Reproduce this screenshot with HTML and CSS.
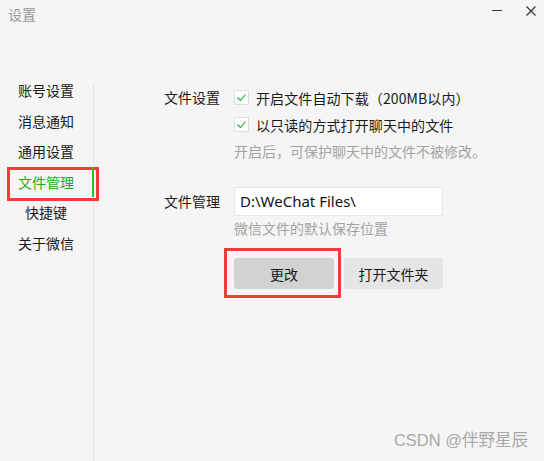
FILE: index.html
```html
<!DOCTYPE html>
<html lang="zh-CN">
<head>
<meta charset="utf-8">
<title>设置</title>
<link rel="stylesheet" href="styles.css">
</head>
<body>
<div class="window">
  <header class="titlebar">
    <span class="title">设置</span>
    <div class="controls">
      <span class="ctl-min"></span>
      <svg class="ctl-close" width="10" height="10" viewBox="0 0 10 10"><path d="M0.5 0.5 L9.5 9.5 M9.5 0.5 L0.5 9.5" stroke="#333" stroke-width="1.2" fill="none"/></svg>
    </div>
  </header>
  <div class="main">
    <nav class="sidebar">
      <div class="item">账号设置</div>
      <div class="item">消息通知</div>
      <div class="item">通用设置</div>
      <div class="item active">文件管理<span class="annot annot-nav"></span></div>
      <div class="item">快捷键</div>
      <div class="item">关于微信</div>
    </nav>
    <div class="divider"></div>
    <section class="content">
      <div class="group">
        <div class="label">文件设置</div>
        <div class="opts">
          <div class="check">
            <svg class="box" width="15" height="15" viewBox="0 0 15 15"><rect x="0.5" y="0.5" width="14" height="14" fill="#fff" stroke="#dedede"/><path d="M3.5 7.5 L6.5 10.5 L11.5 4.5" stroke="#1aad19" stroke-width="1.1" fill="none"/></svg>
            <span>开启文件自动下载（200MB以内）</span>
          </div>
          <div class="check">
            <svg class="box" width="15" height="15" viewBox="0 0 15 15"><rect x="0.5" y="0.5" width="14" height="14" fill="#fff" stroke="#dedede"/><path d="M3.5 7.5 L6.5 10.5 L11.5 4.5" stroke="#1aad19" stroke-width="1.1" fill="none"/></svg>
            <span>以只读的方式打开聊天中的文件</span>
          </div>
          <div class="hint">开启后，可保护聊天中的文件不被修改。</div>
        </div>
      </div>
      <div class="group group-path">
        <div class="label label-path">文件管理</div>
        <div class="opts">
          <div class="input">D:\WeChat Files\</div>
          <div class="hint hint-path">微信文件的默认保存位置</div>
          <div class="buttons">
            <button class="btn btn-change">更改<span class="annot annot-btn"></span></button>
            <button class="btn btn-open">打开文件夹</button>
          </div>
        </div>
      </div>
    </section>
  </div>
  <div class="watermark">CSDN @伴野星辰</div>
</div>
</body>
</html>
```
FILE: styles.css
```css
* { box-sizing: border-box; }
html, body { margin: 0; padding: 0; }
body {
  background: #f5f5f5;
  font-family: "Noto Sans CJK SC", "Noto Sans", sans-serif;
  font-size: 14px;
  color: #1a1a1a;
}
.window {
  position: relative;
  width: 544px;
  height: 461px;
  display: flex;
  flex-direction: column;
  overflow: hidden;
}
.titlebar {
  height: 74px;
  flex: none;
  display: flex;
  justify-content: space-between;
  align-items: flex-start;
  padding: 4px 8px 0 8px;
}
.title {
  color: #999;
  font-size: 14px;
  line-height: 20px;
}
.controls {
  display: flex;
  align-items: flex-start;
  gap: 24px;
  padding-top: 2px;
}
.ctl-min {
  display: block;
  width: 10px;
  height: 1px;
  background: #333;
  margin-top: 4px;
}
.ctl-close { display: block; margin-right: 0; }

.main {
  flex: 1;
  display: flex;
  min-height: 0;
}
.sidebar {
  width: 93px;
  flex: none;
  padding-top: 1px;
}
.item {
  position: relative;
  height: 30.6px;
  line-height: 30.6px;
  width: 92px;
  text-align: center;
  color: #1a1a1a;
}
.item.active { color: #1aad19; }
.item.active::after {
  content: "";
  position: absolute;
  left: 92px;
  top: 0;
  width: 2px;
  height: 30px;
  background: #2bc127;
}
.divider {
  width: 1px;
  flex: none;
  margin-top: 10px;
  background: #e2e2e2;
}
.annot {
  position: absolute;
  border: 3px solid #f23c3c;
  pointer-events: none;
}
.annot-nav {
  left: 7px;
  top: 0;
  width: 92px;
  height: 34px;
}

.content {
  flex: 1;
  padding: 10px 0 0 70px;
}
.group {
  display: flex;
}
.label {
  width: 70px;
  flex: none;
  line-height: 27px;
}
.opts {
  display: flex;
  flex-direction: column;
}
.check {
  height: 27px;
  display: flex;
  align-items: center;
  gap: 7px;
}
.check span { letter-spacing: 0.1px; }
.box { display: block; flex: none; margin-top: -1px; }
.hint {
  color: #a3a3a3;
  line-height: 27px;
}
.group-path { margin-top: 22px; }
.label-path { line-height: 29px; }
.input {
  width: 209px;
  height: 29px;
  background: #fff;
  border: 1px solid #e6e6e6;
  font-family: "Noto Sans", sans-serif;
  font-size: 15px;
  line-height: 27px;
  padding-left: 5px;
  color: #111;
}
.hint-path {
  line-height: 20px;
  margin-top: 2px;
}
.buttons {
  display: flex;
  gap: 10px;
  margin-top: 20px;
}
.btn {
  position: relative;
  height: 31px;
  border: none;
  border-radius: 3px;
  font-family: "Noto Sans CJK SC", sans-serif;
  font-size: 14px;
  color: #1a1a1a;
  padding: 0;
}
.btn-change { width: 100px; background: #d2d2d2; }
.btn-open { width: 99px; background: #e5e5e5; }
.annot-btn {
  left: -10px;
  top: -10px;
  width: 117px;
  height: 50px;
}
.watermark {
  position: absolute;
  right: 16px;
  bottom: 10px;
  color: #a8a8a8;
  font-size: 16.5px;
  font-family: "Liberation Sans", "Noto Sans CJK SC", sans-serif;
}
```
